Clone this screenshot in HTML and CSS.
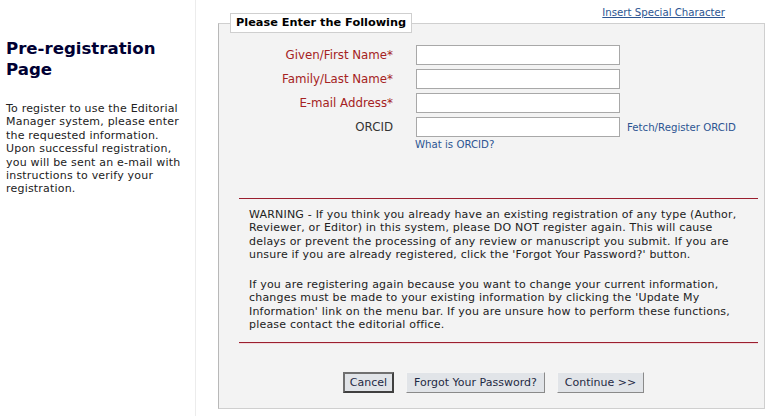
FILE: index.html
```html
<!DOCTYPE html>
<html lang="en">
<head>
  <meta charset="UTF-8">
  <title>Pre-registration Page</title>
  <link rel="stylesheet" href="styles.css">
</head>
<body>
  <div class="page">
    <div class="sidebar">
      <h1 class="title">Pre-registration Page</h1>
      <p class="intro">To register to use the Editorial Manager system, please enter the requested information. Upon successful registration, you will be sent an e-mail with instructions to verify your registration.</p>
    </div>

    <div class="main">
      <div class="tools">
        <a href="#" class="special">Insert Special Character</a>
      </div>

      <fieldset class="box">
        <legend>Please Enter the Following</legend>

        <div class="fields">
          <label class="req" for="firstName">Given/First Name*</label>
          <input type="text" id="firstName">
          <span></span>

          <label class="req" for="lastName">Family/Last Name*</label>
          <input type="text" id="lastName">
          <span></span>

          <label class="req" for="email">E-mail Address*</label>
          <input type="text" id="email">
          <span></span>

          <label for="orcid">ORCID</label>
          <input type="text" id="orcid">
          <a href="#" class="link">Fetch/Register ORCID</a>

          <span></span>
          <a href="#" class="link what">What is ORCID?</a>
          <span></span>
        </div>

        <div class="warning">
          <p>WARNING - If you think you already have an existing registration of any type (Author, Reviewer, or Editor) in this system, please DO NOT register again. This will cause delays or prevent the processing of any review or manuscript you submit. If you are unsure if you are already registered, click the 'Forgot Your Password?' button.</p>
          <p>If you are registering again because you want to change your current information, changes must be made to your existing information by clicking the 'Update My Information' link on the menu bar. If you are unsure how to perform these functions, please contact the editorial office.</p>
        </div>

        <div class="buttons">
          <button class="btn focused">Cancel</button>
          <button class="btn">Forgot Your Password?</button>
          <button class="btn">Continue &gt;&gt;</button>
        </div>
      </fieldset>
    </div>
  </div>
</body>
</html>
```

FILE: styles.css
```css
body {
  margin: 0;
  font-family: "DejaVu Sans", Verdana, sans-serif;
  font-size: 11px;
  color: #222;
  background: #fff;
}

.page {
  display: flex;
  min-height: 416px;
}

.sidebar {
  width: 196px;
  box-sizing: border-box;
  padding: 38px 12px 0 6px;
  border-right: 1px solid #ececec;
}

.title {
  margin: 0;
  font-size: 16.6px;
  line-height: 21px;
  font-weight: bold;
  color: #000033;
}

.intro {
  margin: 22px 0 0 0;
  line-height: 13.4px;
  letter-spacing: 0.2px;
}

.main {
  flex: 1;
  padding-left: 22px;
  padding-right: 6px;
}

.tools {
  text-align: right;
  padding: 6px 40px 0 0;
  line-height: 13px;
  margin-bottom: -6px;
}

.special {
  font-size: 10.2px;
  color: #2c5592;
}

.box {
  margin: 0;
  padding: 12px 6px 15px 0;
  border: 1px solid #cfcfcf;
  border-left-color: #b8b8b8;
  background: #f3f3f3;
}

.box legend {
  margin-left: 11px;
  padding: 2px 5px 3px 5px;
  font-size: 11.3px;
  font-weight: bold;
  color: #000;
  background: #fff;
  border: 1px solid #cfcfcf;
}

.fields {
  display: grid;
  grid-template-columns: 174px 204px auto;
  column-gap: 23px;
  row-gap: 4px;
  align-items: center;
}

.fields label {
  text-align: right;
  color: #333;
  font-size: 11.8px;
}

.fields label.req {
  color: #a52222;
}

.fields input {
  height: 20px;
  box-sizing: border-box;
  margin: 0;
  border: 1px solid #a8a8a8;
  background: #fff;
}

.fields .link {
  margin-left: -16px;
}

.fields .what {
  margin-left: -1px;
  margin-top: -2px;
}

.link {
  font-size: 10.2px;
  color: #2c5592;
  text-decoration: none;
}

.warning {
  margin: 48px 0 0 20px;
  padding: 9px 10px 11px 10px;
  border-top: 1px solid #9a1e2e;
  border-bottom: 1px solid #9a1e2e;
  box-shadow: 0 1px 0 #f2d9dc;
  line-height: 13.3px;
  letter-spacing: 0.2px;
}

.warning p {
  margin: 0;
}

.warning p + p {
  margin-top: 17px;
}

.buttons {
  margin-top: 29px;
  padding-left: 10px;
  display: flex;
  justify-content: center;
  gap: 12px;
}

.btn {
  height: 21px;
  padding: 0 7px;
  font-family: "DejaVu Sans", Verdana, sans-serif;
  font-size: 11px;
  color: #1f2a44;
  background: #e1e4e8;
  border: 1px solid;
  border-color: #f4f4f4 #8a8a8a #8a8a8a #f4f4f4;
}

.btn.focused {
  border: 2px solid;
  border-color: #707070 #404040 #404040 #707070;
  padding: 0 5px;
}
```
